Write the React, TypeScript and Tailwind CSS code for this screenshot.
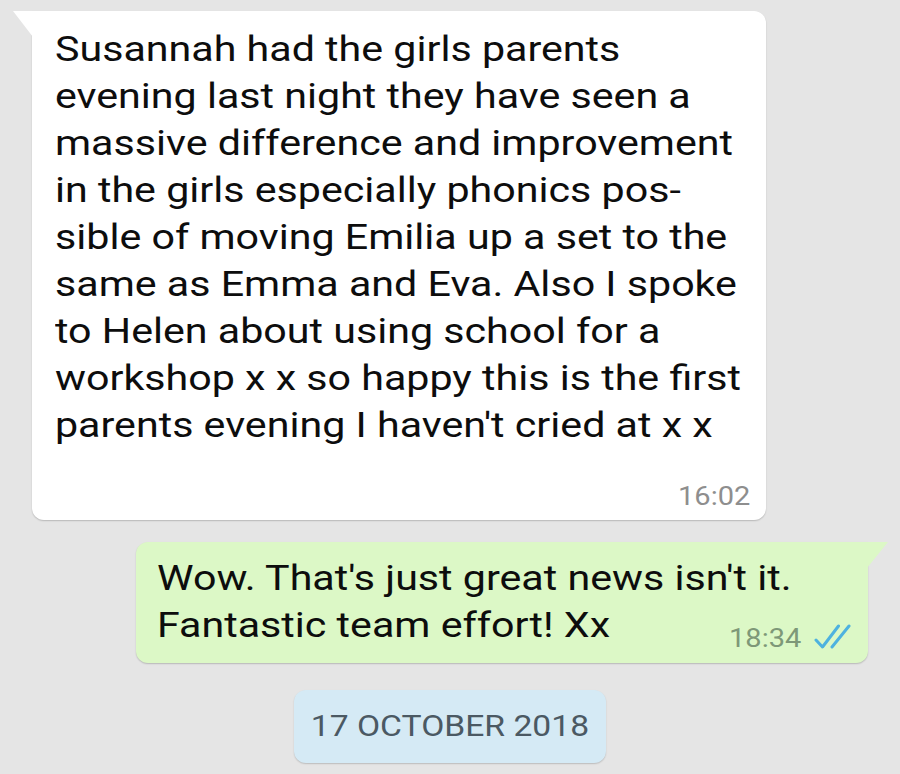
import React from "react";

const incoming = [
  "Susannah had the girls parents",
  "evening last night they have seen a",
  "massive difference and improvement",
  "in the girls especially phonics pos-",
  "sible of moving Emilia up a set to the",
  "same as Emma and Eva. Also I spoke",
  "to Helen about using school for a",
  "workshop x x so happy this is the first",
  "parents evening I haven't cried at x x",
];

function Ticks() {
  return (
    <svg width="38" height="26" viewBox="0 0 38 26" fill="none" stroke="#4eb2df" strokeWidth="3" strokeLinecap="round" strokeLinejoin="round">
      <path d="M3 17 L9.5 24 L25.5 3" />
      <path d="M19 24 L36 3" />
    </svg>
  );
}

export default function App() {
  return (
    <div className="w-[900px] h-[774px] bg-[#e5e5e5] overflow-hidden relative" style={{ fontFamily: "Roboto, 'Liberation Sans', sans-serif" }}>
      <div className="flex flex-col">
        {/* incoming */}
        <div className="relative ml-[32px] mt-[11px] w-[734px] h-[509px] bg-white rounded-[12px] rounded-tl-none shadow-[0_1px_1.5px_rgba(0,0,0,0.2)]">
          <svg className="absolute left-[-19px] top-0" width="20" height="26" viewBox="0 0 20 26">
            <path d="M0 0 L20 0 L20 26 Z" fill="#ffffff" />
          </svg>
          <div className="pl-[23px] pt-[15px]">
            <div className="text-[35.5px] leading-[47px] text-[#0d0d0d] origin-top-left scale-x-[1.16]">
              {incoming.map((l, i) => (
                <div key={i} className="whitespace-nowrap">{l}</div>
              ))}
            </div>
          </div>
          <div className="absolute right-[16px] bottom-[11px] text-[25px] text-[#8e8e8e] leading-none origin-right scale-x-[1.16]">16:02</div>
        </div>

        {/* outgoing */}
        <div className="relative ml-[136px] mt-[22px] w-[732px] h-[121px] bg-[#dcf8c6] rounded-[12px] rounded-tr-none shadow-[0_1px_1.5px_rgba(0,0,0,0.2)]">
          <svg className="absolute right-[-20px] top-0" width="21" height="26" viewBox="0 0 21 26">
            <path d="M21 0 L0 0 L0 26 Z" fill="#dcf8c6" />
          </svg>
          <div className="pl-[21px] pt-[13px]">
            <div className="text-[35.5px] leading-[47px] text-[#0d0d0d] origin-top-left scale-x-[1.16]">
              <div className="whitespace-nowrap">Wow. That's just great news isn't it.</div>
              <div className="whitespace-nowrap">Fantastic team effort! Xx</div>
            </div>
          </div>
          <div className="absolute right-[17px] bottom-[12px] flex items-end gap-[12px]">
            <span className="text-[25px] text-[#7e9878] leading-none origin-right scale-x-[1.16]">18:34</span>
            <div className="mb-[2px]"><Ticks /></div>
          </div>
        </div>

        {/* date */}
        <div className="flex justify-center mt-[27px]">
          <div className="w-[312px] h-[73px] bg-[#d5eaf5] rounded-[12px] shadow-[0_1px_1.5px_rgba(0,0,0,0.18)] flex items-center justify-center">
            <span className="text-[29px] text-[#4b5963] scale-x-[1.16] leading-none">17 OCTOBER 2018</span>
          </div>
        </div>
      </div>
    </div>
  );
}
